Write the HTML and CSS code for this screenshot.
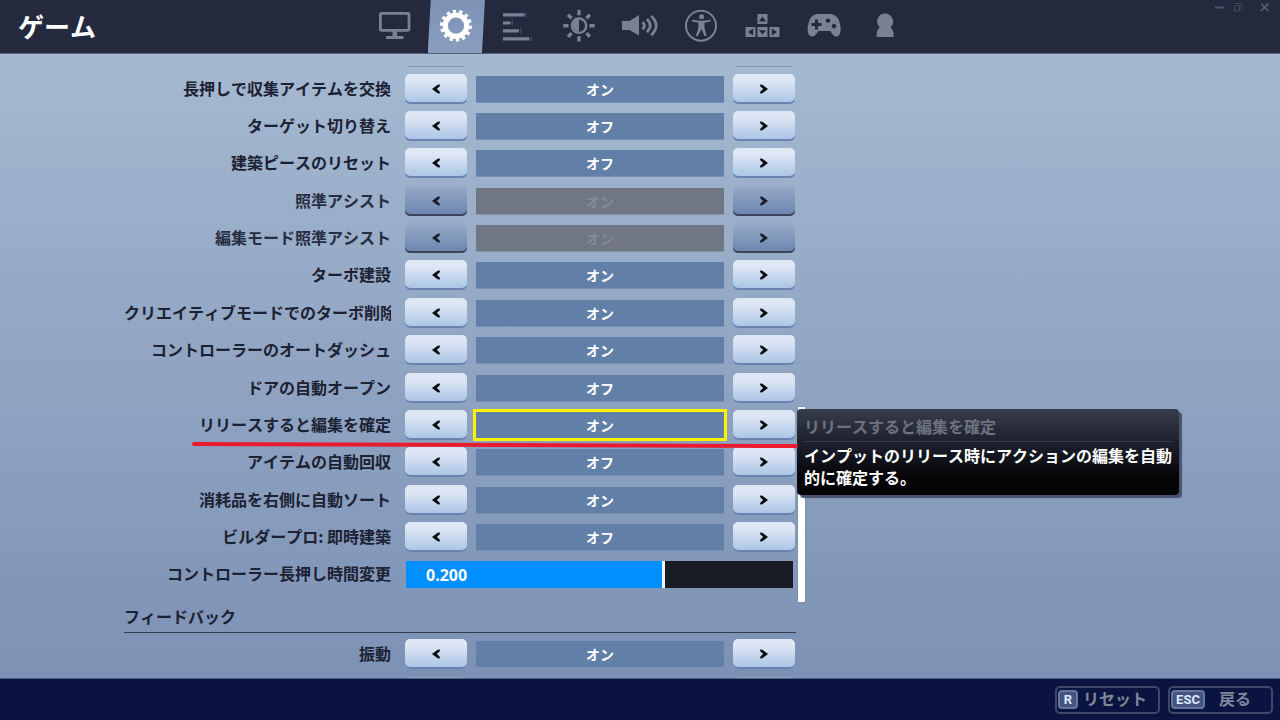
FILE: index.html
```html
<!DOCTYPE html>
<html lang="ja">
<head>
<meta charset="utf-8">
<title>ゲーム</title>
<link rel="stylesheet" href="styles.css">
</head>
<body>
<svg class="defs" aria-hidden="true">
  <symbol id="prev" viewBox="0 0 8 10"><path d="M0 5 5.6 .8 8 .4 7.6 2.6 4.8 5 7.6 7.4 8 9.6 5.6 9.2Z"/></symbol>
  <symbol id="next" viewBox="0 0 8 10"><path d="M8 5 2.4 .8 0 .4 .4 2.6 3.2 5 .4 7.4 0 9.6 2.4 9.2Z"/></symbol>
</svg>

<header class="topbar">
  <h1 class="title">ゲーム</h1>
  <nav class="tabs">
    <button class="tab" aria-label="ビデオ"><svg class="icon" viewBox="0 0 36 36"><rect class="line" x="3.4" y="4.3" width="28.6" height="17" rx="1" stroke-width="2.8"/><path d="M15.5 22h4.6v5h6.4v3H9v-3h6.5z"/></svg></button>
    <button class="tab tab-active" aria-label="ゲーム"><svg class="icon" viewBox="0 0 36 36"><circle class="line" cx="18" cy="16.7" r="10.7" stroke-width="5.2"/><circle class="line" cx="18" cy="16.7" r="14" stroke-width="4" pathLength="14" stroke-dasharray=".52 .48"/></svg></button>
    <button class="tab" aria-label="ゲームUI"><svg class="icon" viewBox="0 0 36 36"><path d="M3 4.2h21.5v3.4H3zM3 12.4h7.6v3H3zM3 20.2h16v3.4H3zM3 28.2h26.5v3.4H3z"/><path class="tick" d="M25.3 3.6h1v4.8h-1zM11.8 11.6h1v4.8h-1zM20.4 19.6h1v4.8h-1zM31 27.4h1v4.8h-1z"/></svg></button>
    <button class="tab" aria-label="明るさ"><svg class="icon" viewBox="0 0 36 36"><circle class="line" cx="18" cy="16.7" r="7.2" stroke-width="2.4"/><path d="M18 10.5a6.2 6.2 0 0 0 0 12.4z"/><path class="line" stroke-width="3.4" d="M18 1v5.200M18 27.200v5.200M2.300 16.700h5.200M28.500 16.700h5.200M7 5.700l3.600 3.600M25.400 24.100l3.600 3.600M29 5.700l-3.600 3.600M10.600 24.100L7 27.700"/></svg></button>
    <button class="tab" aria-label="オーディオ"><svg class="icon" viewBox="0 0 36 36"><path d="M0 12h7.5L17 6v20.4L7.5 21H0z"/><path class="line" stroke-width="2.8" d="M20.600 13q3.400 3.600 0 7.200M25 10q6.400 6.600 0 13.200M29.200 7q10 9.600 0 19.200"/></svg></button>
    <button class="tab" aria-label="アクセシビリティ"><svg class="icon" viewBox="0 0 36 36"><circle class="line" cx="18" cy="16.7" r="15" stroke-width="2"/><circle cx="18.6" cy="7.8" r="2.5"/><path d="M9 10.8l7.5 1h4l7-1v1.8l-6 1.2v5.2l2.2 8h-2.2L18.4 20 15 27h-2.2l2.6-8.2v-5L9 12.6z"/></svg></button>
    <button class="tab" aria-label="キーボード操作"><svg class="icon" viewBox="0 0 36 36"><path fill-rule="evenodd" d="M13.5 5h10v10h-10zM18.5 7.4l-3.6 5.2h7.2zM1.5 18h10v10h-10zM4 23l5.2 3.6v-7.2zM13.5 18h10v10h-10zM18.5 25.6l3.6-4.4h-7.2zM25.5 18h10v10h-10zM33 23l-5.2-3.6v7.2z"/></svg></button>
    <button class="tab" aria-label="コントローラー"><svg class="icon" viewBox="0 0 36 36"><path fill-rule="evenodd" d="M8 6Q10 4.800 12 5h12q2 0 4 1 4 1.600 5.500 7 1.600 5 1 9.500-.6 4.600-4 5-2.600.2-4.600-3L24.300 22H12.400l-2 2.700q-2 3-4.600 2.800-3.400-.4-4-5-.6-4.600 1-9.500Q4.400 7.600 8 6zM9 10.500V14H5.500v3H9v3.500h3V17h3.500v-3H12v-3.500zM22 9.400a2.300 2.300 0 1 0 .1 0zM28 14.800a2.300 2.300 0 1 0 .1 0z"/></svg></button>
    <button class="tab" aria-label="アカウント"><svg class="icon" viewBox="0 0 36 36"><path d="M18 4.500a8 8 0 0 1 6 13.300q-.6 1.200.6 2 1.800 1.500 2 4.500V28H9.700v-3.700q.2-3 2-4.500 1.200-.8.6-2A8 8 0 0 1 18 4.500z"/></svg></button>
  </nav>
  <div class="window-controls">
    <button class="win" aria-label="最小化"><svg viewBox="0 0 10 10"><path class="line" stroke-width="2" d="M0 4.500h9"/></svg></button>
    <button class="win win-dim" aria-label="元に戻す"><svg viewBox="0 0 10 10"><path class="line" stroke-width="1" d="M1.500 .5h6v7M.5 2.500h5V8h-5z"/></svg></button>
    <button class="win win-close" aria-label="閉じる"><svg viewBox="0 0 10 10"><path class="line" stroke-width="2" d="M1 .500l7.500 7.500M8.500 .500L1 8"/></svg></button>
  </div>
</header>

<main class="content">
  <div class="panel">
    <div class="peek peek-top"><i></i><i></i></div>
    <div class="rows">
      <div class="row" role="group" aria-labelledby="s1"><span class="label" id="s1">長押しで収集アイテムを交換</span><button class="step" aria-label="前へ"><svg><use href="#prev"/></svg></button><output class="value">オン</output><button class="step" aria-label="次へ"><svg><use href="#next"/></svg></button></div>
      <div class="row" role="group" aria-labelledby="s2"><span class="label" id="s2">ターゲット切り替え</span><button class="step" aria-label="前へ"><svg><use href="#prev"/></svg></button><output class="value">オフ</output><button class="step" aria-label="次へ"><svg><use href="#next"/></svg></button></div>
      <div class="row" role="group" aria-labelledby="s3"><span class="label" id="s3">建築ピースのリセット</span><button class="step" aria-label="前へ"><svg><use href="#prev"/></svg></button><output class="value">オフ</output><button class="step" aria-label="次へ"><svg><use href="#next"/></svg></button></div>
      <div class="row row-disabled" role="group" aria-labelledby="s4"><span class="label" id="s4">照準アシスト</span><button class="step" disabled aria-label="前へ"><svg><use href="#prev"/></svg></button><output class="value">オン</output><button class="step" disabled aria-label="次へ"><svg><use href="#next"/></svg></button></div>
      <div class="row row-disabled" role="group" aria-labelledby="s5"><span class="label" id="s5">編集モード照準アシスト</span><button class="step" disabled aria-label="前へ"><svg><use href="#prev"/></svg></button><output class="value">オン</output><button class="step" disabled aria-label="次へ"><svg><use href="#next"/></svg></button></div>
      <div class="row" role="group" aria-labelledby="s6"><span class="label" id="s6">ターボ建設</span><button class="step" aria-label="前へ"><svg><use href="#prev"/></svg></button><output class="value">オン</output><button class="step" aria-label="次へ"><svg><use href="#next"/></svg></button></div>
      <div class="row" role="group" aria-labelledby="s7"><span class="label" id="s7">クリエイティブモードでのターボ削除</span><button class="step" aria-label="前へ"><svg><use href="#prev"/></svg></button><output class="value">オン</output><button class="step" aria-label="次へ"><svg><use href="#next"/></svg></button></div>
      <div class="row" role="group" aria-labelledby="s8"><span class="label" id="s8">コントローラーのオートダッシュ</span><button class="step" aria-label="前へ"><svg><use href="#prev"/></svg></button><output class="value">オン</output><button class="step" aria-label="次へ"><svg><use href="#next"/></svg></button></div>
      <div class="row" role="group" aria-labelledby="s9"><span class="label" id="s9">ドアの自動オープン</span><button class="step" aria-label="前へ"><svg><use href="#prev"/></svg></button><output class="value">オフ</output><button class="step" aria-label="次へ"><svg><use href="#next"/></svg></button></div>
      <div class="row row-selected" role="group" aria-labelledby="s10" aria-describedby="tip"><span class="label" id="s10">リリースすると編集を確定</span><button class="step" aria-label="前へ"><svg><use href="#prev"/></svg></button><output class="value">オン</output><button class="step" aria-label="次へ"><svg><use href="#next"/></svg></button>
        <div class="tooltip" id="tip" role="tooltip">
          <p class="tooltip-title">リリースすると編集を確定</p>
          <p class="tooltip-text">インプットのリリース時にアクションの編集を自動的に確定する。</p>
        </div>
        <svg class="marker" viewBox="0 0 608 8" preserveAspectRatio="none" aria-hidden="true"><path d="M3 3 605 5"/></svg>
      </div>
      <div class="row" role="group" aria-labelledby="s11"><span class="label" id="s11">アイテムの自動回収</span><button class="step" aria-label="前へ"><svg><use href="#prev"/></svg></button><output class="value">オフ</output><button class="step" aria-label="次へ"><svg><use href="#next"/></svg></button></div>
      <div class="row" role="group" aria-labelledby="s12"><span class="label" id="s12">消耗品を右側に自動ソート</span><button class="step" aria-label="前へ"><svg><use href="#prev"/></svg></button><output class="value">オン</output><button class="step" aria-label="次へ"><svg><use href="#next"/></svg></button></div>
      <div class="row" role="group" aria-labelledby="s13"><span class="label" id="s13">ビルダープロ: 即時建築</span><button class="step" aria-label="前へ"><svg><use href="#prev"/></svg></button><output class="value">オフ</output><button class="step" aria-label="次へ"><svg><use href="#next"/></svg></button></div>
      <div class="row"><label class="label" for="hold">コントローラー長押し時間変更</label><div class="slider"><input class="range" id="hold" type="range" min="0.1" max="0.25" step="0.001" value="0.2"><output class="slider-value" for="hold">0.200</output></div></div>
    </div>
    <h2 class="section">フィードバック</h2>
    <div class="row row-last" role="group" aria-labelledby="s15"><span class="label" id="s15">振動</span><button class="step" aria-label="前へ"><svg><use href="#prev"/></svg></button><output class="value">オン</output><button class="step" aria-label="次へ"><svg><use href="#next"/></svg></button></div>
    <div class="peek peek-bottom"><i></i><i></i></div>
  </div>
  <div class="scrollbar"><div class="scroll-thumb"></div></div>
</main>

<footer class="bottombar">
  <button class="action"><kbd class="key">R</kbd><span class="action-text">リセット</span></button>
  <button class="action"><kbd class="key key-wide">ESC</kbd><span class="action-text action-center">戻る</span></button>
</footer>
</body>
</html>
```
FILE: styles.css
```css
* {
  box-sizing: border-box;
}

body {
  margin: 0;
  min-height: 100vh;
  display: flex;
  flex-direction: column;
  overflow-x: hidden;
  background: linear-gradient(#a5b9d1 54px, #7c91b4 678px);
  color: #1c2133;
  font: 700 16px/22px "Noto Sans CJK JP", sans-serif;
  font-kerning: none;
}

button {
  margin: 0;
  padding: 0;
  border: 0;
  background: none;
  color: inherit;
  font: inherit;
}

svg {
  display: block;
  fill: currentColor;
}

.defs {
  position: absolute;
  width: 0;
  height: 0;
}

.line {
  fill: none;
  stroke: currentColor;
}

/* Top bar */

.topbar {
  flex: none;
  height: 54px;
  display: grid;
  grid-template-columns: 1fr 551px 1fr;
  border-bottom: 1px solid #56617b;
  background: #24293d;
}

.title {
  align-self: center;
  margin: 0;
  padding: 0 0 2px 18px;
  color: #fff;
  font-size: 26px;
  line-height: 38px;
}

.tabs {
  display: flex;
}

.tab {
  flex: 1;
  margin: 0 2px;
  display: flex;
  align-items: center;
  justify-content: center;
  color: #7b8192;
}

.tab-active {
  color: #fff;
  background: linear-gradient(#7c91b4, #8a9fc0);
  clip-path: polygon(3px 0, 100% 0, calc(100% - 3px) 100%, 0 100%);
}

.icon {
  flex: none;
  width: 36px;
  height: 36px;
}

.tick {
  fill: #4c5777;
}

.window-controls {
  display: flex;
  justify-content: flex-end;
  align-items: flex-start;
  padding: 3px 10px 0 0;
}

.win {
  width: 10px;
  height: 10px;
  color: #4d566d;
}

.win-dim {
  margin-left: 9px;
  color: #414960;
}

.win-close {
  margin-left: 16px;
}

/* Settings list */

.content {
  flex: 1;
  display: flex;
  gap: 2px;
  padding-left: 124px;
}

.panel {
  width: 672px;
  display: flex;
  flex-direction: column;
}

.rows {
  flex: 1;
  display: flex;
  flex-direction: column;
}

.row {
  position: relative;
  flex: 1 0 36px;
  display: grid;
  grid-template-columns: minmax(0, 1fr) 62px 248px 62px;
  column-gap: 9px;
  align-items: center;
  padding-right: 1px;
}

.row-last {
  flex: none;
  height: 42px;
}

.label {
  margin-right: 5px;
  padding-bottom: 2px;
  overflow: hidden;
  white-space: nowrap;
  text-align: right;
}

.row-disabled .label {
  color: #272d42;
}

.step {
  height: 30px;
  display: flex;
  align-items: center;
  justify-content: center;
  border-radius: 5px;
  background: linear-gradient(#dfe7f4 20%, #abc5e7 95%);
  box-shadow: inset 0 -2px #6883ad;
  color: #0a0c12;
}

.step svg {
  width: 8px;
  height: 10px;
}

.step:disabled {
  background: linear-gradient(#96aac7, #7088b2 90%);
  box-shadow: inset 0 -2px #3c445a;
  color: #181c2b;
}

.value {
  height: 26px;
  background: #627fa8;
  box-shadow: 0 1px #7690b4;
  color: #fff;
  font-size: 14px;
  line-height: 26px;
  text-align: center;
}

.row-disabled .value {
  background: #707683;
  box-shadow: 0 1px #8792a5;
  color: #848b99;
}

.row-selected {
  z-index: 1;
}

.row-selected .value {
  outline: 3px solid #fff200;
  box-shadow: none;
}

.marker {
  position: absolute;
  left: 67px;
  bottom: -5px;
  width: calc(100% - 64px);
  height: 8px;
  fill: none;
  stroke: #e81c2e;
  stroke-width: 4px;
  stroke-linecap: round;
}

.tooltip {
  position: absolute;
  left: calc(100% + 1px);
  top: 3px;
  width: 382px;
  padding: 6px 7px 7px;
  border-radius: 4px;
  background: linear-gradient(#383d4b, #1c1f2c 40%, #050507 80%);
  box-shadow: 3px 3px 1px #47536e;
  color: #fff;
}

.tooltip p {
  margin: 0;
}

.tooltip-title {
  padding-bottom: 4px;
  border-bottom: 1px solid #343a50;
  color: #6d7280;
}

.tooltip-text {
  padding-top: 2px;
}

.slider {
  position: relative;
  grid-column: 2 / -1;
  height: 27px;
  margin: 0 2px 0 1px;
}

.range {
  appearance: none;
  display: block;
  width: 100%;
  height: 100%;
  margin: 0;
  background: linear-gradient(90deg, #008fff 66.6%, #191b27 66.6%);
}

.range::-webkit-slider-thumb {
  appearance: none;
  width: 3px;
  height: 27px;
  background: #eef4fb;
}

.slider-value {
  position: absolute;
  left: 20px;
  top: 3px;
  color: #fff;
  font-family: "Noto Sans", sans-serif;
  pointer-events: none;
}

.section {
  flex: none;
  height: 40px;
  margin: 0;
  padding-top: 12px;
  border-bottom: 1px solid #333a4d;
  font-size: 16px;
}

.peek {
  flex: none;
  display: flex;
  justify-content: space-between;
  padding: 0 4px 0 284px;
}

.peek i {
  width: 55px;
  height: 1px;
  background: #7f96b8;
}

.peek-top {
  height: 16px;
  padding-top: 12px;
}

.peek-bottom {
  height: 3px;
  padding-top: 2px;
}

.peek-bottom i {
  background: #92a4c0;
}

.scrollbar {
  width: 7px;
  display: grid;
  grid-template-rows: 353fr 195fr 76fr;
}

.scroll-thumb {
  grid-row: 2;
  background: #fff;
  box-shadow: 0 0 1px #56617b;
}

/* Bottom bar */

.bottombar {
  flex: none;
  height: 42px;
  display: flex;
  justify-content: flex-end;
  align-items: center;
  gap: 8px;
  padding-right: 7px;
  border-top: 1px solid #4b5c86;
  background: #0b1440;
}

.action {
  width: 105px;
  height: 28px;
  display: flex;
  align-items: center;
  gap: 5px;
  padding: 0 1px;
  border: 2px solid #3e4969;
  border-radius: 5px;
  color: #7f879b;
}

.key {
  width: 20px;
  height: 19px;
  border: 2px solid #64779f;
  border-radius: 4px;
  background: #44547c;
  color: #dce9ff;
  font: 700 13px/15px Roboto, sans-serif;
  text-align: center;
}

.key-wide {
  width: 34px;
}

.action-text {
  padding-bottom: 4px;
  line-height: 20px;
}

.action-center {
  flex: 1;
  padding-right: 10px;
  text-align: center;
}
```
